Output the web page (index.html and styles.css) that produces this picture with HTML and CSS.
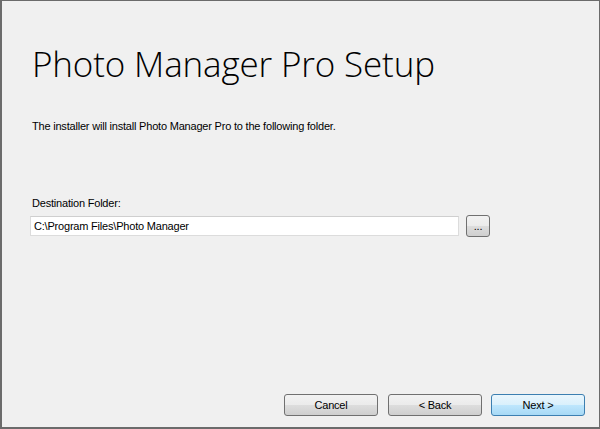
FILE: index.html
```html
<!DOCTYPE html>
<html>
<head>
<meta charset="utf-8">
<link rel="stylesheet" href="styles.css">
</head>
<body>
<div class="window">
  <div class="content">
    <h1 class="title">Photo Manager Pro Setup</h1>
    <p class="intro">The installer will install Photo Manager Pro to the following folder.</p>
    <label class="label">Destination Folder:</label>
    <div class="path-row">
      <div class="path-input">C:\Program Files\Photo Manager</div>
      <button class="btn browse">...</button>
    </div>
  </div>
  <div class="footer">
    <button class="btn cancel">Cancel</button>
    <button class="btn back">&lt; Back</button>
    <button class="btn primary">Next &gt;</button>
  </div>
</div>
</body>
</html>
```

FILE: styles.css
```css
html, body {
  margin: 0;
  padding: 0;
  width: 600px;
  height: 429px;
  overflow: hidden;
}
body {
  font-family: "Liberation Sans", Arial, sans-serif;
  font-size: 11px;
  letter-spacing: -0.2px;
  color: #000;
}
.window {
  box-sizing: border-box;
  width: 600px;
  height: 429px;
  background: #f0f0f0;
  border: 1px solid #6b6b6b;
  border-left-width: 2px;
  border-bottom-width: 2px;
  display: flex;
  flex-direction: column;
}
.content {
  flex: 1;
  padding: 0 0 0 30px;
  display: flex;
  flex-direction: column;
}
.title {
  margin: 40px 0 0 0;
  font-family: "Open Sans", sans-serif;
  font-weight: 300;
  font-size: 35px;
  line-height: 46px;
  letter-spacing: -0.15px;
}
.intro {
  margin: 33px 0 0 0;
  line-height: 13px;
}
.label {
  margin-top: 64px;
  line-height: 13px;
}
.path-row {
  margin-top: 5px;
  margin-left: -2px;
  display: flex;
  align-items: center;
  gap: 7px;
}
.path-input {
  box-sizing: border-box;
  width: 429px;
  height: 20px;
  background: #fff;
  border: 1px solid #dcdcdc;
  border-top-color: #cfcfcf;
  padding: 3px 3px;
  line-height: 13px;
}
.btn {
  box-sizing: border-box;
  width: 94px;
  height: 22px;
  border: 1px solid #707070;
  border-radius: 3px;
  background: linear-gradient(#f2f2f2 0%, #ebebeb 50%, #dddddd 51%, #cfcfcf 100%);
  font-family: "Liberation Sans", Arial, sans-serif;
  font-size: 11px;
  letter-spacing: -0.2px;
  color: #000;
  padding: 0;
}
.browse {
  width: 24px;
  height: 22px;
}
.footer {
  display: flex;
  justify-content: flex-end;
  padding: 0 14px 11px 0;
}
.cancel {
  margin-right: 10px;
}
.back {
  margin-right: 9px;
}
.primary {
  border-color: #3c7fb1;
  background: linear-gradient(#eaf6fd 0%, #d9f0fc 50%, #bee6fd 51%, #a7d9f5 100%);
}
```
